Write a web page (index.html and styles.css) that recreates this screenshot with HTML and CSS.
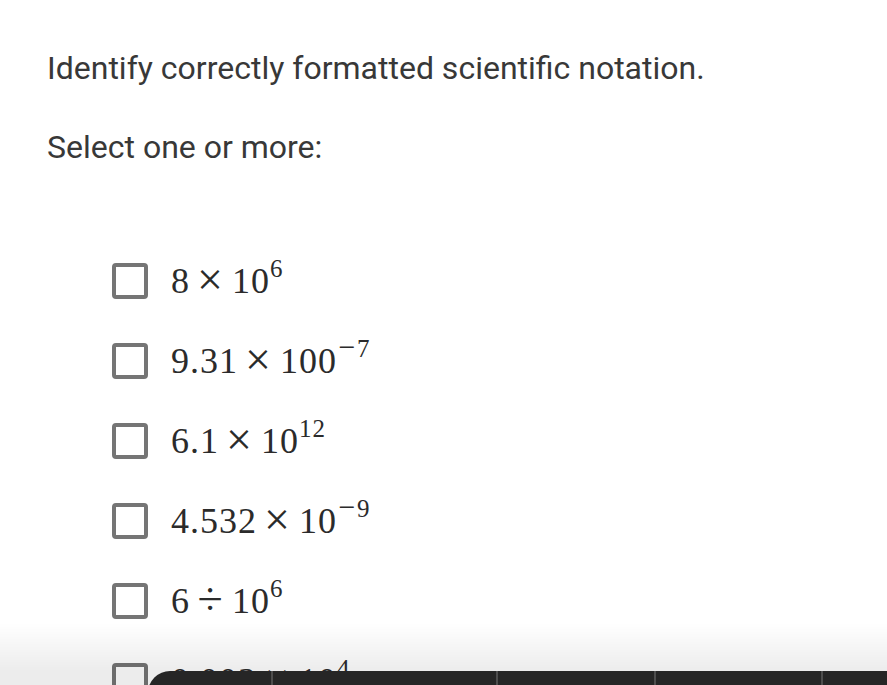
FILE: index.html
```html
<!DOCTYPE html>
<html lang="en">
<head>
<meta charset="utf-8">
<title>Scientific notation</title>
<link rel="stylesheet" href="styles.css">
</head>
<body>
<main class="question">
  <p class="title">Identify correctly formatted scientific notation.</p>
  <p class="prompt">Select one or more:</p>
  <ul class="answers">
    <li class="answer"><span class="box"></span><span class="math">8<span class="op">×</span>10<sup>6</sup></span></li>
    <li class="answer"><span class="box"></span><span class="math">9.31<span class="op">×</span>100<sup><span class="neg">−</span>7</sup></span></li>
    <li class="answer"><span class="box"></span><span class="math">6.1<span class="op">×</span>10<sup>12</sup></span></li>
    <li class="answer"><span class="box"></span><span class="math">4.532<span class="op">×</span>10<sup><span class="neg">−</span>9</sup></span></li>
    <li class="answer"><span class="box"></span><span class="math">6<span class="op">÷</span>10<sup>6</sup></span></li>
    <li class="answer"><span class="box"></span><span class="math">0.003<span class="op">×</span>10<sup>4</sup></span></li>
  </ul>
</main>
<div class="fade"></div>
<nav class="toolbar">
  <span class="seg s1"></span>
  <span class="seg s2"></span>
  <span class="seg s3"></span>
  <span class="seg s4"></span>
  <span class="seg s5"></span>
</nav>
</body>
</html>
```
FILE: styles.css
```css
html, body {
  margin: 0;
  padding: 0;
  background: #ffffff;
}
body {
  font-family: Roboto, "Liberation Sans", sans-serif;
  color: #383838;
}
.question {
  padding: 49px 47px 0 47px;
}
.title {
  margin: 0;
  font-size: 32px;
  line-height: 38px;
}
.prompt {
  margin: 41px 0 0 0;
  font-size: 32px;
  line-height: 38px;
}
.answers {
  list-style: none;
  margin: 75px 0 0 0;
  padding: 0 0 0 65px;
}
.answer {
  display: flex;
  align-items: center;
  height: 80px;
  gap: 23px;
}
.box {
  box-sizing: border-box;
  width: 36px;
  height: 36px;
  border: 4px solid #757575;
  border-radius: 4px;
  flex: none;
}
.math {
  font-family: "Liberation Serif", "Times New Roman", serif;
  font-size: 36px;
  line-height: 36px;
  letter-spacing: 1px;
  color: #2b2b2b;
  white-space: nowrap;
}
.op {
  display: inline-block;
  width: 28px;
  margin: 0 8px 0 6px;
  text-align: center;
  font-size: 46px;
  line-height: 0;
  letter-spacing: 0;
  vertical-align: -2px;
}
.math sup {
  font-size: 25px;
  line-height: 0;
  vertical-align: 16px;
  margin-left: 0;
}
.neg {
  display: inline-block;
  width: 20px;
  text-align: center;
  font-size: 30px;
  line-height: 0;
  letter-spacing: 0;
}
.fade {
  position: fixed;
  left: 0;
  right: 0;
  bottom: 0;
  height: 62px;
  background: linear-gradient(to bottom, rgba(0,0,0,0) 0, rgba(0,0,0,0.075) 48px);
  pointer-events: none;
}
.toolbar {
  position: fixed;
  left: 148px;
  right: 0;
  bottom: -40px;
  height: 54px;
  display: flex;
  background: #262626;
  border-top-left-radius: 22px;
}
.seg {
  box-sizing: border-box;
  height: 100%;
  border-right: 2px solid #4e4e4e;
}
.s1 { width: 125px; }
.s2 { width: 225px; }
.s3 { width: 158px; }
.s4 { width: 167px; }
.s5 { flex: 1; border-right: none; }
```
